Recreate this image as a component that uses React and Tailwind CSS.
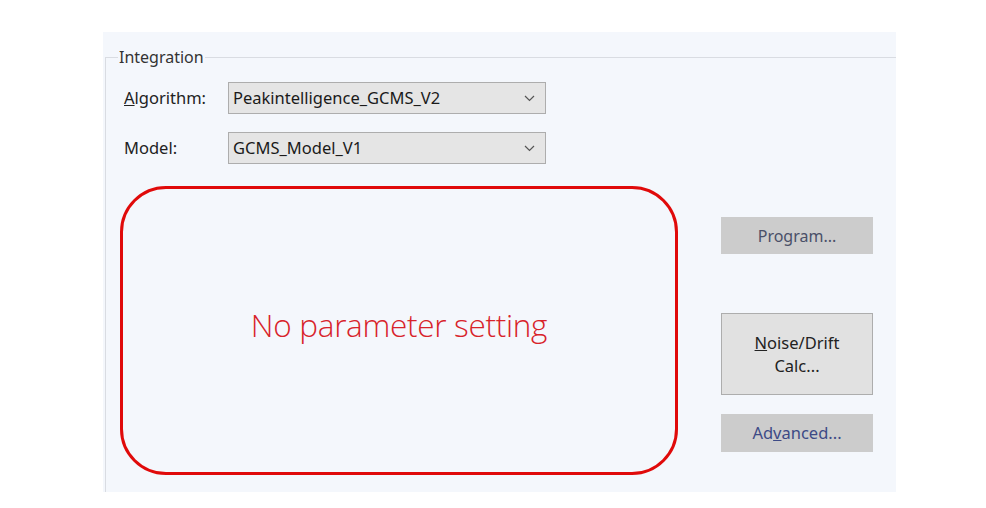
export default function App() {
  const font = { fontFamily: '"Noto Sans", "Open Sans", sans-serif' };

  return (
    <div className="w-[986px] h-[508px] bg-white pt-[32px] pl-[103px]" style={font}>
      <div className="w-[793px] h-[460px] bg-[#f4f7fc] pt-[25px] pl-[2px]">
        {/* group box */}
        <div className="relative h-[435px] border-t border-l border-[#d9dce2]">
          <span className="absolute left-[12px] top-[-11px] px-[1px] bg-[#f4f7fc] text-[16px] leading-[20px] text-[#333]">
            Integration
          </span>

          <div className="pt-[24px] flex flex-col gap-[18px]">
            <Row label={<><span className="underline">A</span>lgorithm:</>} value="Peakintelligence_GCMS_V2" />
            <Row label="Model:" value="GCMS_Model_V1" />
          </div>

          <div className="flex mt-[22px]">
            <div className="ml-[14px] w-[558px] h-[289px] rounded-[46px] border-[3px] border-[#e00a0a] flex items-center justify-center">
              <span className="text-[31.5px] font-light text-[#d8232a] tracking-[-0.3px] mt-[-12px]" style={{ fontFamily: '"Open Sans", "Noto Sans", sans-serif' }}>
                No parameter setting
              </span>
            </div>

            <div className="ml-[43px] w-[152px] flex flex-col">
              <div className="mt-[31px] h-[37px] bg-[#cccccc] flex items-center justify-center text-[16px] text-[#4a5068]">
                Program...
              </div>
              <div className="mt-[59px] h-[82px] bg-[#e1e1e1] border border-[#adadad] flex flex-col items-center justify-center text-[16.5px] leading-[23px] text-[#222]">
                <span><span className="underline">N</span>oise/Drift</span>
                <span>Calc...</span>
              </div>
              <div className="mt-[19px] h-[38px] bg-[#cccccc] flex items-center justify-center text-[16.5px] text-[#3d4a86]">
                <span>Ad<span className="underline">v</span>anced...</span>
              </div>
            </div>
          </div>
        </div>
      </div>
    </div>
  );
}

function Row({ label, value }) {
  return (
    <div className="flex items-center h-[32px]">
      <div className="pl-[18px] w-[122px] text-[16.5px] text-[#222]">{label}</div>
      <div className="w-[318px] h-[32px] bg-[#e5e5e5] border border-[#adadad] flex items-center justify-between pl-[4px] pr-[10px]">
        <span className="text-[16.5px] text-[#1a1a1a]">{value}</span>
        <svg width="11" height="7" viewBox="0 0 11 7" fill="none" stroke="#555" strokeWidth="1.2">
          <polyline points="1,1 5.5,5.5 10,1" />
        </svg>
      </div>
    </div>
  );
}
